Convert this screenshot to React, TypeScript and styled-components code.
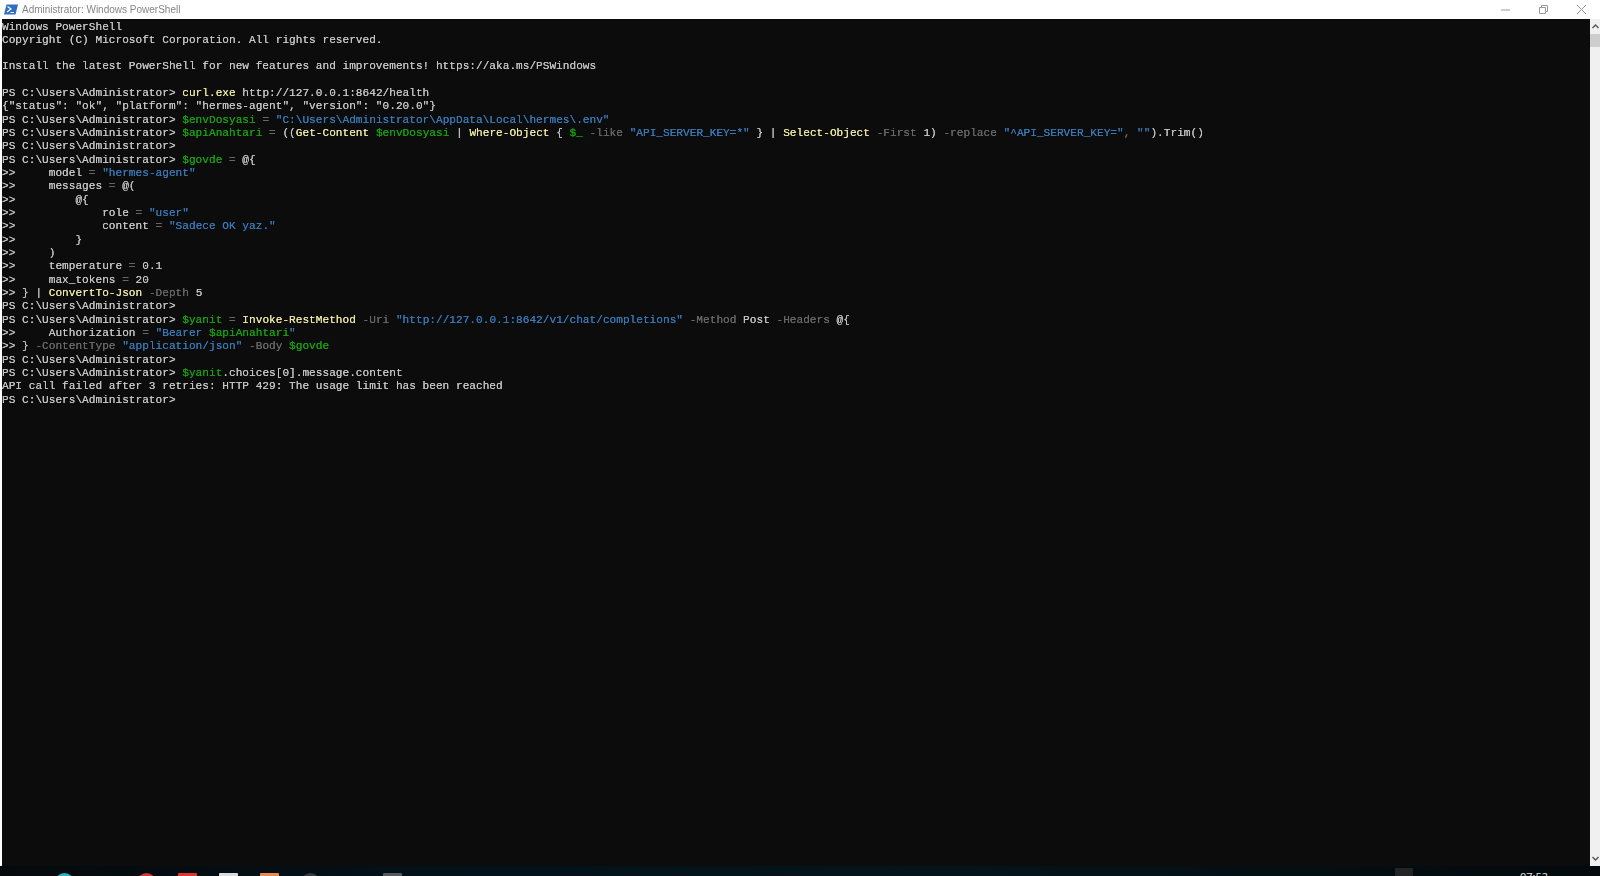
import styled, { createGlobalStyle } from "styled-components";

const GlobalStyle = createGlobalStyle`
  html, body {
    margin: 0;
    padding: 0;
    background: #0c0c0c;
    overflow: hidden;
  }
`;

const Screen = styled.div`
  width: 1600px;
  height: 876px;
  display: flex;
  flex-direction: column;
  overflow: hidden;
`;

const TitleBar = styled.div`
  height: 19px;
  flex: none;
  display: flex;
  align-items: center;
  background: #ffffff;
  padding-left: 4px;
`;

const TitleText = styled.span`
  margin-left: 4px;
  font: 10px "Liberation Sans", "Open Sans", sans-serif;
  color: #858585;
  white-space: pre;
  filter: blur(0.3px);
`;

const WindowControls = styled.div`
  margin-left: auto;
  display: flex;
  align-items: center;
  gap: 29px;
  padding-right: 14px;
  color: #9a9a9a;
`;

const Main = styled.div`
  flex: 1;
  min-height: 0;
  display: flex;
  background: #ffffff;
  padding-left: 2px;
`;

const Console = styled.div`
  flex: 1;
  min-width: 0;
  background: #0c0c0c;
  padding-top: 1.5px;
`;

const Line = styled.div`
  height: 13.33px;
  line-height: 13.33px;
  font-family: "Liberation Mono", "DejaVu Sans Mono", monospace;
  font-size: 11.13px;
  white-space: pre;
  color: #c4c4c4;
  text-shadow: 0 0 0.4px currentColor;
  filter: blur(0.3px);
`;

const tokenColors = {
  plain: "#c4c4c4",
  cmd: "#ece6a2",
  variable: "#15a00e",
  str: "#3878b6",
  param: "#686868",
};

type TokenKind = keyof typeof tokenColors;

const Token = styled.span<{ $kind: TokenKind }>`
  color: ${(p) => tokenColors[p.$kind]};
`;

const Scrollbar = styled.div`
  width: 10px;
  flex: none;
  display: flex;
  flex-direction: column;
  background: #f0f0f0;
`;

const ScrollArrow = styled.div`
  height: 15px;
  flex: none;
  display: flex;
  align-items: center;
  justify-content: center;
  color: #555555;
`;

const ScrollThumb = styled.div`
  height: 13px;
  flex: none;
  background: #cdcdcd;
`;

const ScrollTrack = styled.div`
  flex: 1;
`;

const Taskbar = styled.div`
  height: 10px;
  flex: none;
  display: flex;
  overflow: hidden;
  padding-left: 44px;
  background: linear-gradient(90deg, #05090c 0%, #03121a 30%, #04141a 60%, #03090d 100%);
  position: relative;
`;

const TaskSlot = styled.div`
  width: 41px;
  flex: none;
  display: flex;
  justify-content: center;
  padding-top: 7px;
`;

const TaskIcon = styled.div<{ $color: string; $round?: boolean }>`
  width: 19px;
  height: 19px;
  background: ${(p) => p.$color};
  border-radius: ${(p) => (p.$round ? "50%" : "1px")};
`;

const ActiveTask = styled.div`
  position: absolute;
  left: 1395px;
  top: 2px;
  width: 18px;
  height: 8px;
  background: #222426;
`;

const Clock = styled.div`
  position: absolute;
  left: 1520px;
  top: 5px;
  font: 11px "Open Sans", "Liberation Sans", sans-serif;
  line-height: 12px;
  color: #e0e0e0;
`;

type Seg = [TokenKind, string];

const P = "PS C:\\Users\\Administrator> ";
const prompt: Seg = ["plain", P];
const more = (indent: string): Seg => ["plain", ">>" + indent];

const lines: Seg[][] = [
  [["plain", "Windows PowerShell"]],
  [["plain", "Copyright (C) Microsoft Corporation. All rights reserved."]],
  [],
  [["plain", "Install the latest PowerShell for new features and improvements! https://aka.ms/PSWindows"]],
  [],
  [prompt, ["cmd", "curl.exe"], ["plain", " http://127.0.0.1:8642/health"]],
  [["plain", '{"status": "ok", "platform": "hermes-agent", "version": "0.20.0"}']],
  [prompt, ["variable", "$envDosyasi"], ["param", " = "], ["str", '"C:\\Users\\Administrator\\AppData\\Local\\hermes\\.env"']],
  [
    prompt,
    ["variable", "$apiAnahtari"],
    ["param", " = "],
    ["plain", "(("],
    ["cmd", "Get-Content"],
    ["plain", " "],
    ["variable", "$envDosyasi"],
    ["plain", " | "],
    ["cmd", "Where-Object"],
    ["plain", " { "],
    ["variable", "$_"],
    ["param", " -like "],
    ["str", '"API_SERVER_KEY=*"'],
    ["plain", " } | "],
    ["cmd", "Select-Object"],
    ["param", " -First"],
    ["plain", " 1) "],
    ["param", "-replace "],
    ["str", '"^API_SERVER_KEY="'],
    ["param", ", "],
    ["str", '""'],
    ["plain", ").Trim()"],
  ],
  [prompt],
  [prompt, ["variable", "$govde"], ["param", " = "], ["plain", "@{"]],
  [more("     "), ["plain", "model"], ["param", " = "], ["str", '"hermes-agent"']],
  [more("     "), ["plain", "messages"], ["param", " = "], ["plain", "@("]],
  [more("         "), ["plain", "@{"]],
  [more("             "), ["plain", "role"], ["param", " = "], ["str", '"user"']],
  [more("             "), ["plain", "content"], ["param", " = "], ["str", '"Sadece OK yaz."']],
  [more("         "), ["plain", "}"]],
  [more("     "), ["plain", ")"]],
  [more("     "), ["plain", "temperature"], ["param", " = "], ["plain", "0.1"]],
  [more("     "), ["plain", "max_tokens"], ["param", " = "], ["plain", "20"]],
  [more(" "), ["plain", "} | "], ["cmd", "ConvertTo-Json"], ["param", " -Depth"], ["plain", " 5"]],
  [prompt],
  [
    prompt,
    ["variable", "$yanit"],
    ["param", " = "],
    ["cmd", "Invoke-RestMethod"],
    ["param", " -Uri "],
    ["str", '"http://127.0.0.1:8642/v1/chat/completions"'],
    ["param", " -Method"],
    ["plain", " Post"],
    ["param", " -Headers"],
    ["plain", " @{"],
  ],
  [more("     "), ["plain", "Authorization"], ["param", " = "], ["str", '"Bearer '], ["variable", "$apiAnahtari"], ["str", '"']],
  [more(" "), ["plain", "} "], ["param", "-ContentType "], ["str", '"application/json"'], ["param", " -Body "], ["variable", "$govde"]],
  [prompt],
  [prompt, ["variable", "$yanit"], ["plain", ".choices[0].message.content"]],
  [["plain", "API call failed after 3 retries: HTTP 429: The usage limit has been reached"]],
  [prompt],
];

const taskIcons: { color: string; round?: boolean }[] = [
  { color: "#2fb2c4", round: true },
  { color: "transparent" },
  { color: "#cf3a3a", round: true },
  { color: "#e2352f" },
  { color: "#dcdcdc" },
  { color: "#e98b4e" },
  { color: "#3a3a3a", round: true },
  { color: "transparent" },
  { color: "#555a5c" },
];

function PowerShellIcon() {
  return (
    <svg width="14" height="11" viewBox="0 0 14 11">
      <path d="M2.5 0.5H14L11.5 10.5H0Z" fill="#2f6fc0" />
      <path d="M3.5 2.5L7 5L3 8" fill="none" stroke="#ffffff" strokeWidth="1.2" />
      <path d="M6.5 8.5H10" stroke="#ffffff" strokeWidth="1" />
    </svg>
  );
}

export default function App() {
  return (
    <>
      <GlobalStyle />
      <Screen>
        <TitleBar>
          <PowerShellIcon />
          <TitleText>Administrator: Windows PowerShell</TitleText>
          <WindowControls>
            <svg width="9" height="9" viewBox="0 0 9 9">
              <path d="M0 5H9" stroke="currentColor" />
            </svg>
            <svg width="9" height="9" viewBox="0 0 9 9" fill="none">
              <path d="M0.5 2.5H6.5V8.5H0.5Z M2.5 2.5V0.5H8.5V6.5H6.5" stroke="currentColor" />
            </svg>
            <svg width="9" height="9" viewBox="0 0 9 9">
              <path d="M0 0L9 9M9 0L0 9" stroke="currentColor" />
            </svg>
          </WindowControls>
        </TitleBar>
        <Main>
          <Console>
            {lines.map((segs, i) => (
              <Line key={i}>
                {segs.map(([kind, text], j) => (
                  <Token key={j} $kind={kind}>
                    {text}
                  </Token>
                ))}
              </Line>
            ))}
          </Console>
          <Scrollbar>
            <ScrollArrow>
              <svg width="7" height="5" viewBox="0 0 7 5" fill="none">
                <path d="M0.5 4L3.5 1L6.5 4" stroke="currentColor" strokeWidth="1.4" />
              </svg>
            </ScrollArrow>
            <ScrollThumb />
            <ScrollTrack />
            <ScrollArrow>
              <svg width="7" height="5" viewBox="0 0 7 5" fill="none">
                <path d="M0.5 1L3.5 4L6.5 1" stroke="currentColor" strokeWidth="1.4" />
              </svg>
            </ScrollArrow>
          </Scrollbar>
        </Main>
        <Taskbar>
          {taskIcons.map((icon, i) => (
            <TaskSlot key={i}>
              <TaskIcon $color={icon.color} $round={icon.round} />
            </TaskSlot>
          ))}
          <ActiveTask />
          <Clock>07:52</Clock>
        </Taskbar>
      </Screen>
    </>
  );
}
